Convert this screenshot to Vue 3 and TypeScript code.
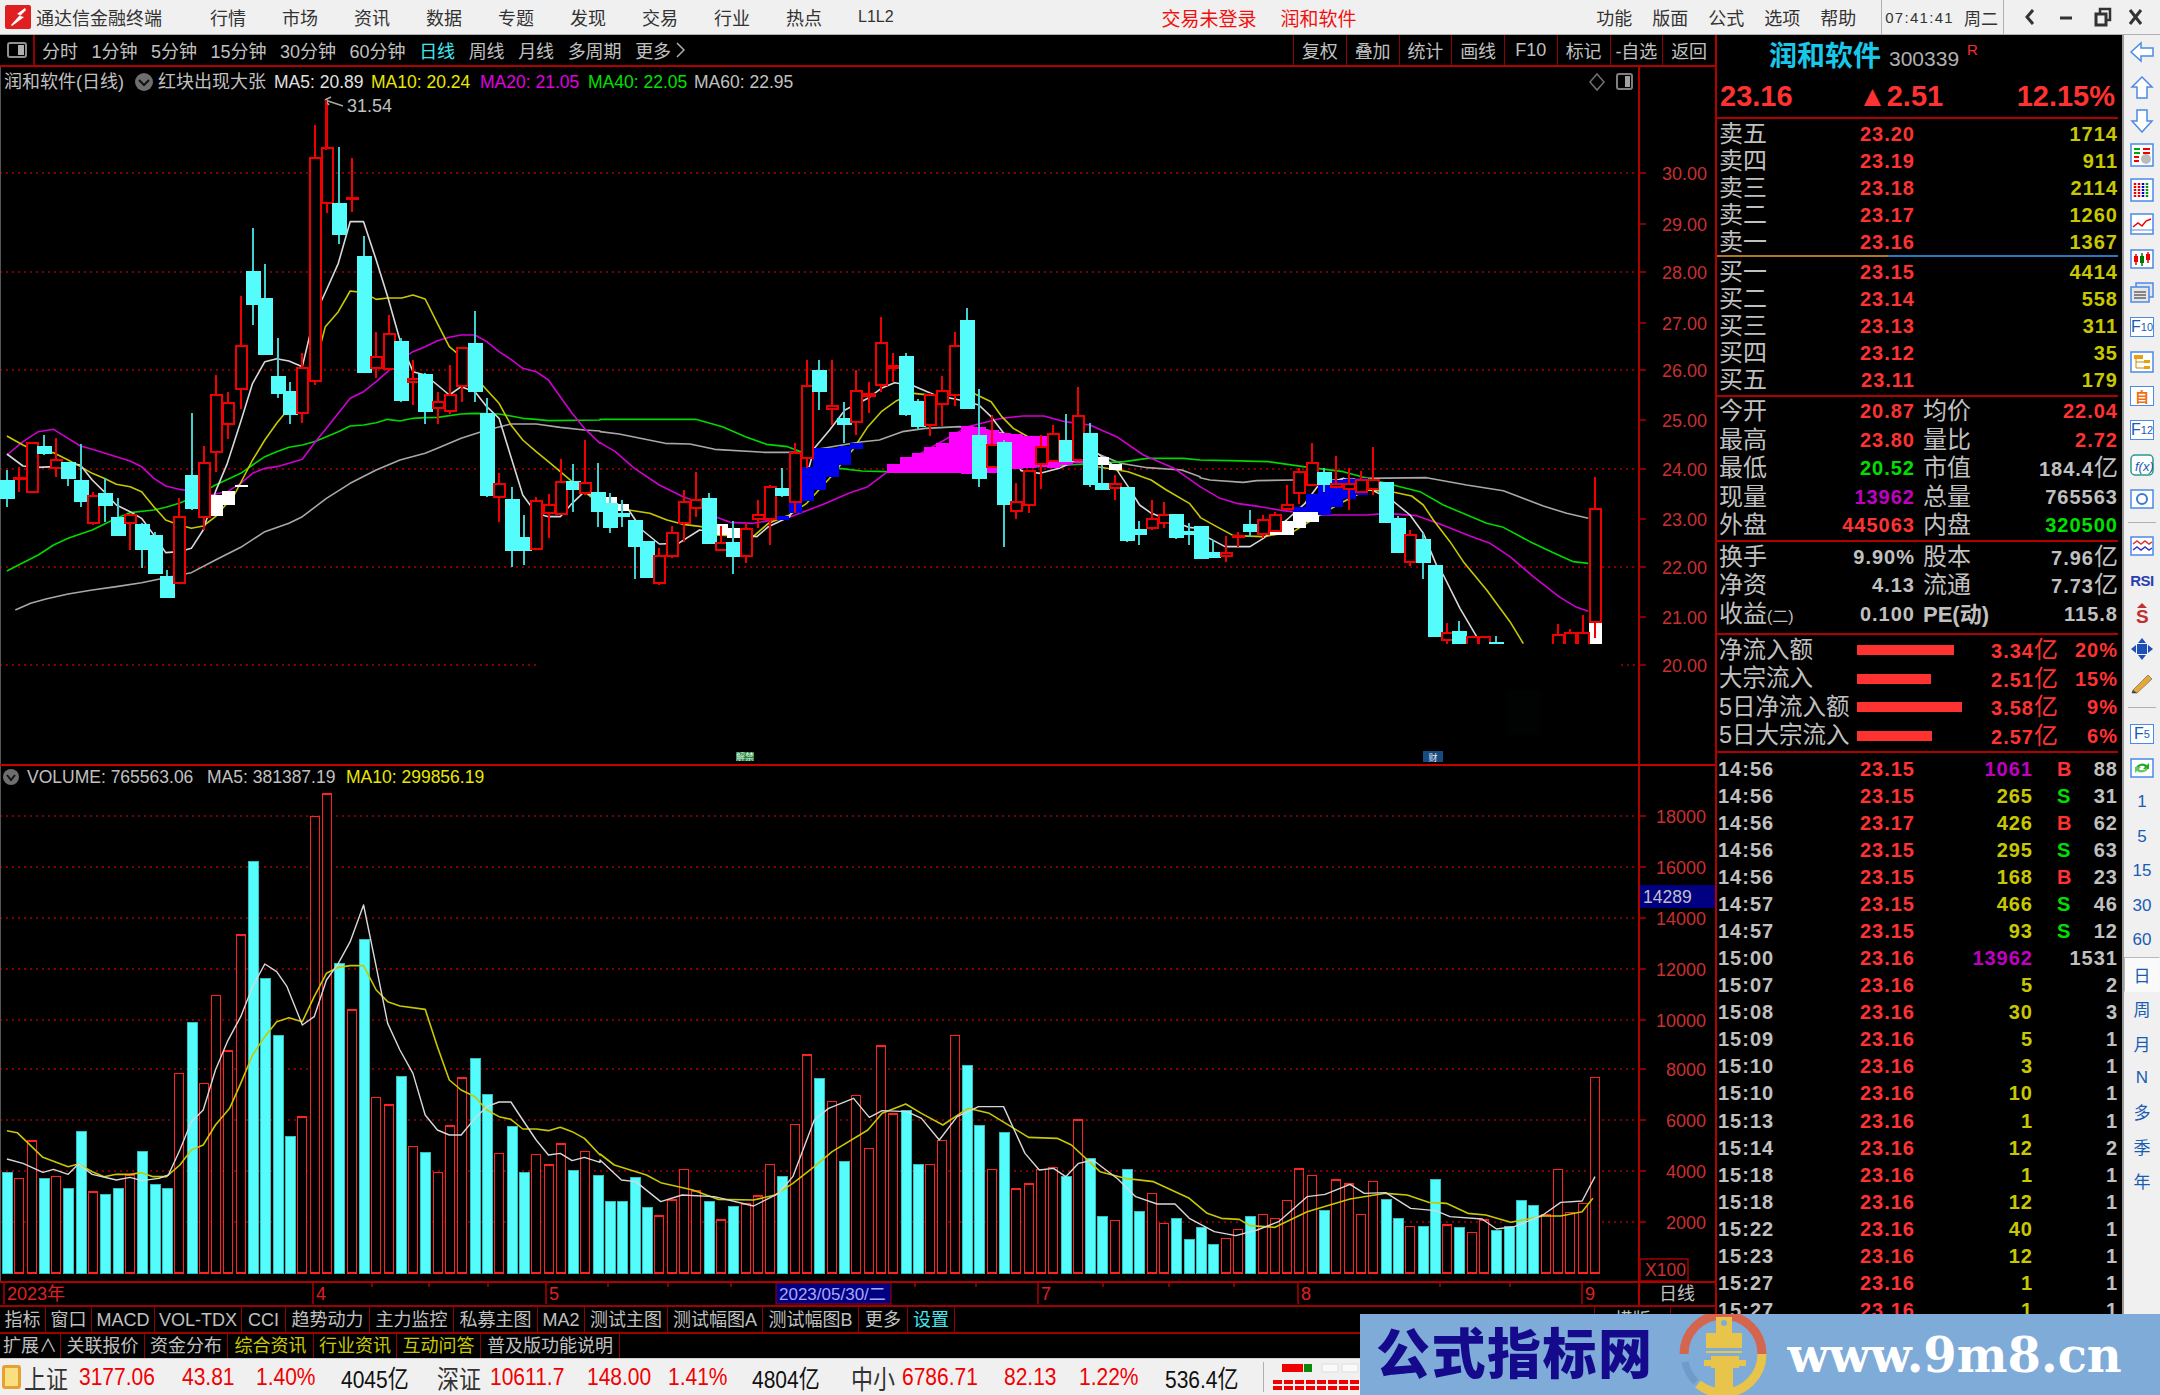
<template>
  <div class="screen">
    <header class="titlebar">
      <svg class="app-logo" width="26" height="24" viewBox="0 0 26 24">
        <rect width="26" height="24" rx="2" fill="#e02020" />
        <path d="M20 3 L12 9 L15 10 L6 20 L7 21 L19 12 L15 11 L21 5 Z" fill="#fff" />
      </svg>
      <span class="app-name">通达信金融终端</span>
      <nav class="main-menu">
        <span v-for="m in mainMenu" :key="m" :class="{ 'menu-small': m === 'L1L2' }">{{ m }}</span>
      </nav>
      <div class="alerts">
        <span>交易未登录</span>
        <span>润和软件</span>
      </div>
      <div class="title-right">
        <nav class="sub-menu">
          <span v-for="m in subMenu" :key="m">{{ m }}</span>
        </nav>
        <div class="clock">
          <span class="clock-time">07:41:41</span>
          <span>周二</span>
        </div>
        <div class="win-ctrl">
          <svg width="130" height="24" viewBox="0 0 130 24" fill="none" stroke="#333" stroke-width="3">
            <path d="M16 5 L10 12 L16 19" />
            <path d="M43 13 H55" />
            <rect x="79" y="9" width="10" height="11" stroke-width="3" />
            <path d="M83 8 V4 H93 V15 H90" stroke-width="2.5" />
            <path d="M113 5 L124 19 M124 5 L113 19" />
          </svg>
        </div>
      </div>
    </header>

    <div class="workspace">
      <section class="chart-col">
        <div class="toolbar">
          <div class="toolbar-icon">
            <svg width="20" height="16" viewBox="0 0 20 16">
              <rect x="1" y="1" width="18" height="14" rx="2" fill="none" stroke="#909090" stroke-width="2" />
              <rect x="11" y="3" width="6" height="10" fill="#b0b0b0" />
            </svg>
          </div>
          <div class="period-list">
            <span v-for="p in periods" :key="p" :class="{ active: p === '日线' }">{{ p }}</span>
            <svg class="more-chevron" width="9" height="16" viewBox="0 0 9 16">
              <path d="M1 1 L8 8 L1 15" fill="none" stroke="#b0b0b0" stroke-width="1.5" />
            </svg>
          </div>
          <div class="tool-btns">
            <span v-for="b in toolBtns" :key="b">{{ b }}</span>
          </div>
        </div>

        <svg class="pane-main" width="1715" height="697" viewBox="0 67 1715 697">
          <line
            v-for="g in mainGrid"
            :key="g.from + '-' + g.y"
            :x1="g.from"
            :x2="g.to"
            :y1="g.y"
            :y2="g.y"
            class="grid"
          />
          <line x1="0.5" x2="0.5" y1="67" y2="764" stroke="#555" />
          <line x1="1639" x2="1639" y1="67" y2="764" class="axis" />
          <polyline v-for="l in maLines" :key="l.name" :points="l.points" :stroke="l.color" class="ma" />
          <rect
            v-for="b in blocks"
            :key="b.key"
            :x="b.x"
            :y="b.y"
            width="13"
            :height="b.h"
            :fill="b.color"
            shape-rendering="crispEdges"
          />
          <g shape-rendering="crispEdges">
            <g v-for="c in candles" :key="c.i">
              <line :x1="c.x" :x2="c.x" :y1="c.high" :y2="c.top" :class="c.up ? 'wick-up' : 'wick-down'" />
              <line :x1="c.x" :x2="c.x" :y1="c.bot" :y2="c.low" :class="c.up ? 'wick-up' : 'wick-down'" />
              <rect
                :x="c.up ? c.x - 5.5 : c.x - 6.5"
                :y="c.top"
                :width="c.up ? 11 : 13"
                :height="c.h"
                :class="c.up ? 'body-up' : 'body-down'"
              />
            </g>
          </g>
          <rect x="1450" y="644" width="153" height="120" fill="#000" />
          <rect x="1508" y="690" width="32" height="45" fill="#010303" />

          <path d="M325 100 L331 97 M325 100 L329 105 M325 100 L343 106" stroke="#a8a8a8" stroke-width="1.5" fill="none" />
          <text x="347" y="112" class="t-18 fill-gray">31.54</text>
          <line x1="326" x2="326" y1="100" y2="150" stroke="#e00000" stroke-width="2" />

          <text x="4" y="88" class="t-cjk fill-gray">润和软件(日线)</text>
          <circle cx="144" cy="82" r="9" fill="#6e6e6e" />
          <path d="M139 80 L144 85 L149 80" stroke="#111" stroke-width="2" fill="none" />
          <text x="158" y="88" class="t-cjk fill-gray">红块出现大张</text>
          <text x="274" y="88" class="t-17 fill-white">MA5: 20.89</text>
          <text x="371" y="88" class="t-17 fill-yellow">MA10: 20.24</text>
          <text x="480" y="88" class="t-17 fill-magenta">MA20: 21.05</text>
          <text x="588" y="88" class="t-17 fill-green">MA40: 22.05</text>
          <text x="694" y="88" class="t-17 fill-gray">MA60: 22.95</text>

          <path d="M1597 74 L1604 82 L1597 90 L1590 82 Z" fill="none" stroke="#707070" stroke-width="1.5" />
          <rect x="1617" y="74" width="15" height="15" rx="2" fill="none" stroke="#808080" stroke-width="2" />
          <rect x="1625" y="76" width="5" height="11" fill="#a0a0a0" />

          <g v-for="p in priceTicks" :key="p.label">
            <line x1="1639" x2="1646" :y1="p.y" :y2="p.y" class="tick" />
            <text x="1707" :y="p.y + 7" text-anchor="end" class="t-18 fill-axis">{{ p.label }}</text>
          </g>

          <rect x="736" y="752" width="18" height="9" fill="#1a8a3a" />
          <text x="745" y="760" text-anchor="middle" class="t-tag">解禁</text>
          <rect x="1423" y="751" width="20" height="11" fill="#174a80" />
          <text x="1433" y="761" text-anchor="middle" class="t-tag">财</text>
        </svg>

        <svg class="pane-volume" width="1715" height="539" viewBox="0 766 1715 539">
          <line v-for="y in volGrid" :key="y" x1="0" x2="1639" :y1="y" :y2="y" class="grid" />
          <line x1="0.5" x2="0.5" y1="766" y2="1282" stroke="#555" />
          <line x1="1639" x2="1639" y1="766" y2="1305" class="axis" />
          <g shape-rendering="crispEdges">
            <rect
              v-for="v in volumes"
              :key="v.i"
              :x="v.up ? v.x - 4.5 : v.x - 5"
              :y="v.y"
              :width="v.up ? 9 : 10"
              :height="v.h"
              :class="v.up ? 'vol-up' : 'vol-down'"
            />
          </g>
          <polyline :points="volMa10" stroke="#c8c800" class="ma" />
          <polyline :points="volMa5" stroke="#d8d8d8" class="ma ma-thin" />

          <circle cx="11" cy="777" r="8" fill="#6e6e6e" />
          <path d="M7 775 L11 780 L15 775" stroke="#111" stroke-width="2" fill="none" />
          <text x="27" y="783" class="t-17 fill-gray">VOLUME: 765563.06</text>
          <text x="207" y="783" class="t-17 fill-gray">MA5: 381387.19</text>
          <text x="346" y="783" class="t-17 fill-yellow">MA10: 299856.19</text>

          <g v-for="v in volTicks" :key="v.label">
            <line x1="1639" x2="1646" :y1="v.y" :y2="v.y" class="tick" />
            <text x="1706" :y="v.y + 7" text-anchor="end" class="t-18 fill-axis">{{ v.label }}</text>
          </g>
          <rect x="1640" y="885" width="75" height="23" fill="#000080" />
          <text x="1643" y="903" class="t-17 fill-gray">14289</text>
          <rect x="1640" y="1259" width="48" height="22" fill="none" stroke="#a00000" stroke-width="1.5" />
          <text x="1645" y="1276" class="t-17 fill-axis">X100</text>

          <line x1="0" x2="1715" y1="1282" y2="1282" class="axis" />
          <line v-for="t in dateTicks" :key="t" :x1="t" :x2="t" y1="1283" y2="1287" class="tick" />
          <line v-for="d in dateLabels" :key="d.text" :x1="d.x" :x2="d.x" y1="1283" y2="1304" class="tick" />
          <text
            v-for="d in dateLabels"
            :key="'t' + d.text"
            :x="d.x + 3"
            y="1300"
            class="t-cjk fill-axis-bright"
          >{{ d.text }}</text>
          <rect x="776" y="1283" width="115" height="21" fill="#000080" stroke="#a00000" />
          <text x="779" y="1300" class="t-date">2023/05/30/二</text>
          <text x="1659" y="1300" class="t-cjk fill-gray">日线</text>
        </svg>

        <div class="tab-row">
          <span
            v-for="t in tabsA"
            :key="t.text"
            class="tab"
            :class="t.tone"
            :style="{ width: t.width + 'px' }"
          >{{ t.text }}</span>
          <span class="tab tab-end">横版</span>
        </div>
        <div class="tab-row">
          <span
            v-for="t in tabsB"
            :key="t.text"
            class="tab"
            :class="t.tone"
            :style="{ width: t.width + 'px' }"
          >{{ t.text }}</span>
        </div>
      </section>

      <aside class="quote">
        <div class="quote-title">
          <span class="stock-name">润和软件</span>
          <span class="stock-code">300339</span>
          <span class="stock-flag">R</span>
        </div>
        <div class="quote-price">
          <span>23.16</span>
          <span class="price-up">▲2.51</span>
          <span>12.15%</span>
        </div>

        <div class="book book-sell">
          <div v-for="r in sells" :key="r[0]" class="book-row">
            <span class="lbl">{{ r[0] }}</span>
            <span class="num red">{{ r[1] }}</span>
            <span class="num yellow">{{ r[2] }}</span>
          </div>
        </div>
        <div class="book-split"><i></i><b></b></div>
        <div class="book book-buy">
          <div v-for="r in buys" :key="r[0]" class="book-row">
            <span class="lbl">{{ r[0] }}</span>
            <span class="num red">{{ r[1] }}</span>
            <span class="num yellow">{{ r[2] }}</span>
          </div>
        </div>

        <div class="stat-block stat-a">
          <div v-for="s in statsA" :key="s.a" class="stat-row">
            <span class="lbl">{{ s.a }}</span>
            <span class="num" :class="s.ta">{{ s.va }}</span>
            <span class="lbl lbl-b">{{ s.b }}</span>
            <span class="num" :class="s.tb">{{ s.vb }}<em v-if="s.unit" class="unit">亿</em></span>
          </div>
        </div>
        <div class="stat-block stat-b">
          <div v-for="s in statsB" :key="s.a" class="stat-row">
            <span class="lbl">{{ s.a }}<small v-if="s.sub" class="lbl-sub">{{ s.sub }}</small></span>
            <span class="num gray">{{ s.va }}</span>
            <span class="lbl lbl-b">
              <template v-if="s.b === 'PE(动)'"><strong class="pe">PE(动)</strong></template>
              <template v-else>{{ s.b }}</template>
            </span>
            <span class="num gray">{{ s.vb }}<em v-if="s.unit" class="unit">亿</em></span>
          </div>
        </div>
        <div class="flow-block">
          <div v-for="f in flows" :key="f.label" class="flow-row">
            <span class="lbl flow-lbl">{{ f.label }}</span>
            <span class="flow-track"><i :style="{ width: f.bar + 'px' }"></i></span>
            <span class="num red">{{ f.val }}<em class="unit">亿</em></span>
            <span class="num red">{{ f.pct }}</span>
          </div>
        </div>
        <div class="ticks">
          <div v-for="(t, i) in ticks" :key="i" class="tick-row">
            <span class="num gray tick-time">{{ t[0] }}</span>
            <span class="num red">{{ t[1] }}</span>
            <span class="num" :class="t[2].length > 3 ? 'purple' : 'yellow'">{{ t[2] }}</span>
            <span class="num tick-side" :class="t[3] === 'B' ? 'red' : 'green'">{{ t[3] }}</span>
            <span class="num gray">{{ t[4] }}</span>
          </div>
        </div>
      </aside>

      <aside class="sidebar">
        <div class="side-btn"><svg width="26" height="22" viewBox="0 0 26 22"><path d="M2 11 L12 2 V7 H24 V15 H12 V20 Z" class="arrow" /></svg></div>
        <div class="side-btn"><svg width="24" height="24" viewBox="0 0 24 24"><path d="M12 2 L22 12 H17 V23 H7 V12 H2 Z" class="arrow" /></svg></div>
        <div class="side-btn"><svg width="24" height="24" viewBox="0 0 24 24"><path d="M12 23 L22 12 H17 V1 H7 V12 H2 Z" class="arrow" /></svg></div>
        <div class="side-btn">
          <svg width="24" height="24" viewBox="0 0 24 24">
            <rect x="1" y="1" width="22" height="22" class="box" />
            <path d="M4 6 H10 M4 10 H10" stroke="#0a0" stroke-width="2" />
            <path d="M13 6 H20 M13 10 H20" stroke="#e00" stroke-width="2" />
            <path d="M4 14 H9 M4 18 H9" stroke="#e00" stroke-width="2" />
            <circle cx="16" cy="16" r="5" fill="#bbb" />
          </svg>
        </div>
        <div class="side-btn">
          <svg width="24" height="24" viewBox="0 0 24 24">
            <rect x="1" y="1" width="22" height="22" class="box" />
            <path d="M5 5 V19 M9 5 V19" stroke="#e00" stroke-width="2.5" stroke-dasharray="2 1" />
            <path d="M13 5 V19" stroke="#00c" stroke-width="2.5" stroke-dasharray="2 1" />
            <path d="M17 5 V19" stroke="#090" stroke-width="2.5" stroke-dasharray="2 1" />
          </svg>
        </div>
        <div class="side-btn">
          <svg width="24" height="22" viewBox="0 0 24 22">
            <rect x="1" y="1" width="22" height="20" class="box" />
            <path d="M3 14 L8 10 L12 13 L16 8 L21 6" stroke="#e00" stroke-width="1.5" fill="none" />
            <path d="M1 17 H23" stroke="#4a8ae8" />
          </svg>
        </div>
        <div class="side-btn">
          <svg width="24" height="20" viewBox="0 0 24 20">
            <rect x="1" y="1" width="22" height="18" class="box" />
            <path d="M6 5 V16 M18 3 V14" stroke="#e00" stroke-width="1.5" />
            <rect x="4" y="7" width="4" height="6" fill="#e00" />
            <path d="M12 4 V17" stroke="#070" stroke-width="1.5" />
            <rect x="10" y="7" width="4" height="7" fill="#070" />
            <rect x="16" y="5" width="4" height="6" fill="#e00" />
          </svg>
        </div>
        <div class="side-btn">
          <svg width="24" height="22" viewBox="0 0 24 22" fill="#e6e6e6" stroke="#4a8ae8" stroke-width="1.5">
            <rect x="6" y="1" width="17" height="14" />
            <rect x="1" y="5" width="18" height="15" />
            <path d="M4 10 H16 M4 13 H16 M4 16 H16" stroke="#666" />
          </svg>
        </div>
        <div class="side-btn"><span class="icon-text">F<small>10</small></span></div>
        <div class="side-btn">
          <svg width="24" height="22" viewBox="0 0 24 22">
            <rect x="1" y="1" width="22" height="20" class="box" />
            <path d="M6 8 V17 H14 M6 11 H14" stroke="#c80" fill="none" />
            <rect x="4" y="4" width="9" height="4" fill="#e8a010" />
            <rect x="14" y="9" width="6" height="3" fill="#e8a010" />
            <rect x="14" y="15" width="6" height="3" fill="#e8a010" />
          </svg>
        </div>
        <div class="side-btn"><span class="icon-text icon-orange">自</span></div>
        <div class="side-btn"><span class="icon-text">F<small>12</small></span></div>
        <div class="side-btn">
          <svg width="24" height="22" viewBox="0 0 24 22">
            <rect x="1" y="1" width="22" height="20" rx="4" fill="#fff" stroke="#2a9a8a" stroke-width="1.5" />
            <text x="5" y="17" class="t-fx">f(x)</text>
          </svg>
        </div>
        <div class="side-btn">
          <svg width="24" height="20" viewBox="0 0 24 20">
            <rect x="1" y="1" width="22" height="18" class="box" />
            <circle cx="12" cy="10" r="5" fill="none" stroke="#3a7ad0" stroke-width="2" />
          </svg>
        </div>
        <div class="side-sep"></div>
        <div class="side-btn">
          <svg width="24" height="20" viewBox="0 0 24 20">
            <rect x="1" y="1" width="22" height="18" class="box" />
            <path d="M3 8 L7 5 L11 8 L15 5 L19 8 L22 6" stroke="#d33" fill="none" stroke-width="1.5" />
            <path d="M3 14 L7 11 L11 14 L15 11 L19 14 L22 12" stroke="#33c" fill="none" stroke-width="1.5" />
          </svg>
        </div>
        <div class="side-btn"><span class="rsi">RSI</span></div>
        <div class="side-btn">
          <svg width="22" height="24" viewBox="0 0 22 24">
            <path d="M11 1 L16 6 H6 Z" fill="#c03030" />
            <text x="5" y="21" class="t-dollar">S</text>
          </svg>
        </div>
        <div class="side-btn">
          <svg width="24" height="24" viewBox="0 0 24 24" fill="#1c4fb8">
            <path d="M12 1 L16 6 H8 Z M12 23 L16 18 H8 Z M1 12 L6 8 V16 Z M23 12 L18 8 V16 Z" />
            <rect x="7" y="7" width="10" height="10" />
          </svg>
        </div>
        <div class="side-btn">
          <svg width="24" height="22" viewBox="0 0 24 22">
            <path d="M3 18 L18 3 L22 7 L7 21 L2 21 Z" fill="#e8a830" stroke="#888" />
            <path d="M3 18 L2 21 L7 21" fill="#444" />
          </svg>
        </div>
        <div class="side-sep side-sep-wide"></div>
        <div class="side-btn"><span class="icon-text">F<small>5</small></span></div>
        <div class="side-btn">
          <svg width="24" height="20" viewBox="0 0 24 20">
            <rect x="1" y="1" width="22" height="18" class="box" />
            <path d="M6 9 A7 6 0 0 1 17 7 L19 5 V11 H13 L15 9 A4 3 0 0 0 8 10 Z" fill="#28a828" />
            <path d="M18 11 A7 6 0 0 1 7 13 L5 15 V9 H11 L9 11 A4 3 0 0 0 16 10 Z" fill="#60c860" />
          </svg>
        </div>
        <div
          v-for="s in sideCycles"
          :key="s"
          class="side-btn side-cycle"
          :class="{ pressed: s === '日' }"
        >{{ s }}</div>
      </aside>
    </div>

    <footer class="statusbar">
      <span class="idx-icon"></span>
      <span
        v-for="s in statusItems"
        :key="s.text"
        class="status-item"
        :class="s.tone"
        :style="{ width: s.width + 'px' }"
      >{{ s.text }}</span>
      <svg class="breadth" width="100" height="30" viewBox="0 0 100 30">
        <rect x="18" y="2" width="21" height="8" fill="#f00000" />
        <rect x="40" y="2" width="8" height="8" fill="#0a8a0a" />
        <rect x="58" y="2" width="16" height="8" fill="#fafafa" stroke="#ddd" />
        <rect x="78" y="2" width="16" height="8" fill="#fafafa" stroke="#ddd" />
        <g fill="#f00000">
          <rect v-for="d in breadthDots" :key="d.key" :x="d.x" :y="d.y" width="9" height="4" />
        </g>
      </svg>
    </footer>

    <div class="watermark">
      <span class="wm-cn">公式指标网</span>
      <svg class="wm-logo" width="90" height="81" viewBox="0 0 90 81">
        <path d="M6 40 A39 39 0 0 1 84 40" fill="none" stroke="#d4654e" stroke-width="9" />
        <path d="M84 40 A39 39 0 0 1 45 79" fill="none" stroke="#e8c44a" stroke-width="9" />
        <path d="M45 79 A39 39 0 0 1 20 70" fill="none" stroke="#e8c44a" stroke-width="9" />
        <path d="M7 48 A39 39 0 0 0 18 68" fill="none" stroke="#6f9bcb" stroke-width="7" />
        <g fill="#e8c44a">
          <rect x="38" y="3" width="16" height="16" />
          <rect x="28" y="19" width="36" height="20" />
          <rect x="33" y="42" width="28" height="12" />
          <rect x="26" y="46" width="42" height="6" />
          <rect x="37" y="54" width="18" height="26" />
        </g>
        <circle cx="46" cy="9" r="3" fill="#7fabd9" />
        <rect x="24" y="34" width="46" height="3" fill="#7fabd9" />
      </svg>
      <span class="wm-url">www.9m8.cn</span>
    </div>
  </div>
</template>

<script setup lang="ts">
type Candle = [string, number, number, number, number]

const mainMenu = ['行情', '市场', '资讯', '数据', '专题', '发现', '交易', '行业', '热点', 'L1L2']
const subMenu = ['功能', '版面', '公式', '选项', '帮助']
const periods = ['分时', '1分钟', '5分钟', '15分钟', '30分钟', '60分钟', '日线', '周线', '月线', '多周期', '更多']
const toolBtns = ['复权', '叠加', '统计', '画线', 'F10', '标记', '-自选', '返回']

const barX = (i: number) => 6.9 + i * 12.31

// measured off the reference in three crops, each with its own origin
const part1: Candle[] = [
  ['c', 1140, 1172, 1224, 1250], ['r', 1130, 1163, 1168, 1205], ['r', 1060, 1060, 1205, 1205], ['c', 1035, 1072, 1088, 1095],
  ['r', 1045, 1110, 1133, 1160], ['c', 1115, 1118, 1165, 1188], ['c', 1063, 1172, 1232, 1250], ['r', 1205, 1218, 1298, 1305],
  ['c', 1165, 1212, 1246, 1295], ['c', 1225, 1285, 1336, 1336], ['r', 1275, 1276, 1298, 1380], ['c', 1300, 1305, 1378, 1435],
  ['c', 1325, 1338, 1450, 1450], ['c', 1440, 1460, 1522, 1525], ['r', 1225, 1280, 1478, 1478], ['c', 968, 1158, 1255, 1260],
  ['r', 1068, 1118, 1280, 1320], ['r', 855, 915, 1087, 1145], ['r', 905, 938, 1002, 1048], ['r', 617, 767, 897, 958],
  ['c', 415, 545, 643, 705], ['c', 522, 627, 792, 792], ['c', 745, 860, 910, 925], ['c', 875, 906, 972, 1002],
  ['r', 790, 835, 970, 998], ['r', 105, 205, 872, 885], ['r', 25, 173, 340, 368], ['c', 172, 343, 432, 462],
  ['r', 203, 324, 328, 365], ['c', 438, 500, 845, 845], ['r', 725, 800, 833, 865], ['r', 676, 732, 838, 838],
  ['c', 745, 757, 931, 935], ['r', 810, 866, 876, 945], ['c', 850, 856, 963, 1002], ['r', 905, 937, 955, 1003],
  ['r', 825, 915, 962, 972], ['r', 775, 775, 889, 935], ['c', 662, 762, 904, 935], ['c', 925, 972, 1216, 1220],
  ['r', 1150, 1181, 1222, 1295], ['c', 1190, 1230, 1381, 1430], ['c', 1275, 1343, 1381, 1425], ['r', 1220, 1232, 1376, 1376],
  ['r', 1212, 1244, 1268, 1345], ['r', 1108, 1177, 1272, 1272], ['c', 1122, 1176, 1197, 1265], ['r', 1050, 1178, 1208, 1215],
  ['c', 1120, 1208, 1264, 1310],
]
const part2: Candle[] = [
  ['c', 640, 672, 740, 758], ['c', 660, 703, 708, 740], ['c', 722, 722, 797, 897], ['c', 783, 785, 890, 893],
  ['r', 805, 828, 908, 915], ['r', 737, 760, 828, 835], ['r', 630, 665, 728, 785], ['r', 575, 661, 684, 712],
  ['c', 638, 656, 790, 790], ['r', 738, 790, 810, 810], ['c', 722, 790, 828, 883], ['r', 730, 746, 828, 848],
  ['r', 660, 706, 716, 745], ['r', 615, 620, 716, 795], ['c', 565, 628, 646, 650], ['r', 490, 520, 666, 700],
  ['r', 240, 319, 535, 565], ['c', 240, 272, 333, 390], ['r', 240, 377, 386, 435], ['c', 367, 416, 432, 490],
  ['r', 270, 332, 427, 465], ['r', 305, 342, 348, 400], ['r', 110, 188, 315, 335], ['r', 220, 259, 263, 305],
  ['c', 218, 232, 402, 408], ['c', 358, 367, 438, 450], ['r', 340, 345, 436, 468], ['r', 287, 332, 372, 438],
  ['r', 155, 198, 345, 378], ['c', 83, 124, 384, 384], ['c', 327, 467, 595, 622], ['r', 405, 494, 562, 562],
  ['c', 480, 488, 672, 802], ['r', 610, 665, 693, 718], ['r', 572, 572, 675, 700], ['r', 465, 500, 552, 628],
  ['r', 435, 463, 544, 544], ['c', 403, 484, 542, 545], ['r', 322, 409, 540, 540], ['c', 430, 461, 613, 620],
  ['c', 555, 612, 627, 627], ['r', 585, 612, 625, 660], ['c', 622, 623, 780, 785], ['c', 722, 750, 762, 795],
  ['r', 660, 718, 743, 750], ['r', 665, 706, 730, 745], ['c', 705, 705, 772, 778], ['c', 728, 757, 763, 795],
]
const part3: Candle[] = [
  ['c', 380, 380, 473, 473], ['c', 420, 460, 470, 475], ['r', 408, 458, 468, 487], ['r', 395, 408, 412, 440],
  ['c', 330, 376, 394, 410], ['r', 345, 360, 402, 415], ['r', 335, 345, 392, 392], ['r', 255, 314, 327, 330],
  ['r', 205, 215, 279, 312], ['r', 128, 188, 254, 254], ['c', 205, 218, 252, 275], ['r', 168, 253, 262, 262],
  ['r', 205, 253, 266, 330], ['r', 213, 240, 275, 275], ['r', 142, 241, 266, 285], ['c', 250, 250, 366, 366],
  ['c', 348, 358, 456, 456], ['r', 390, 404, 487, 497], ['c', 400, 421, 487, 537], ['c', 497, 497, 708, 708],
  ['r', 668, 698, 720, 731], ['c', 663, 695, 760, 760], ['r', 712, 712, 760, 760], ['r', 710, 710, 760, 760],
  ['c', 708, 728, 760, 760], ['c', 800, 800, 810, 810], ['c', 800, 800, 810, 810], ['c', 800, 800, 810, 810],
  ['r', 800, 800, 810, 810], ['r', 672, 706, 760, 760], ['r', 686, 700, 760, 760], ['r', 645, 698, 760, 760],
  ['r', 232, 327, 665, 715],
]

const toCandles = (rows: Candle[], first: number, origin: number) =>
  rows.map((r, n) => {
    const top = origin + r[2] / 3
    const bot = origin + r[3] / 3
    return {
      i: first + n,
      x: Math.round(barX(first + n)),
      up: r[0] === 'r',
      high: origin + r[1] / 3,
      top,
      bot,
      low: origin + r[4] / 3,
      h: Math.max(bot - top, 1),
    }
  })

const candles = [
  ...toCandles(part1, 0, 90),
  ...toCandles(part2, 49, 280),
  ...toCandles(part3, 97, 400),
]

const traceMain = (a: number[], b: number[], c: number[]) => {
  const out: string[] = []
  for (let i = 0; i < a.length; i += 2) out.push(`${a[i] / 2.613},${90 + a[i + 1] / 3}`)
  for (let i = 0; i < b.length; i += 2) out.push(`${600 + b[i] / 2.613},${280 + b[i + 1] / 3}`)
  for (let i = 0; i < c.length; i += 2) out.push(`${1200 + c[i] / 3},${400 + c[i + 1] / 3}`)
  return out.join(' ')
}

const traceVol = (a: number[], b: number[]) => {
  const out: string[] = []
  for (let i = 0; i < a.length; i += 2) out.push(`${a[i] / 2.613},${760 + a[i + 1] / 3}`)
  for (let i = 0; i < b.length; i += 2) out.push(`${600 + b[i] / 1.4},${1000 + b[i + 1] / 3}`)
  return out.join(' ')
}

const maLines = [
  {
    name: 'ma60',
    color: '#a8a8a8',
    points: traceMain(
      [40, 1560, 80, 1540, 120, 1527, 178, 1512, 241, 1500, 304, 1490, 370, 1478, 433, 1463, 500, 1448, 563, 1410, 629, 1372, 692, 1325, 755, 1300, 790, 1280, 853, 1225, 915, 1180, 983, 1140, 1045, 1110, 1111, 1090, 1143, 1075, 1205, 1045, 1272, 1020, 1335, 1002, 1401, 1002, 1464, 1012, 1527, 1020, 1568, 1023],
      [0, 455, 50, 462, 170, 490, 235, 492, 300, 508, 430, 517, 520, 517, 680, 486, 730, 480, 790, 455, 850, 445, 940, 440, 1010, 450, 1100, 470, 1297, 520, 1360, 550, 1430, 563, 1520, 570, 1568, 590],
      [0, 233, 30, 240, 130, 247, 170, 242, 280, 240, 400, 240, 500, 235, 680, 233, 800, 255, 910, 272, 1030, 318, 1100, 340, 1165, 355],
    ),
  },
  {
    name: 'ma40',
    color: '#00d800',
    points: traceMain(
      [18, 1443, 60, 1418, 100, 1395, 140, 1365, 178, 1345, 210, 1332, 241, 1320, 304, 1285, 340, 1268, 402, 1260, 433, 1252, 468, 1240, 500, 1225, 563, 1185, 629, 1150, 660, 1125, 692, 1100, 723, 1085, 755, 1072, 790, 1065, 821, 1055, 853, 1040, 884, 1025, 915, 1008, 950, 1005, 983, 998, 1013, 988, 1045, 993, 1079, 985, 1111, 983, 1143, 982, 1205, 972, 1241, 970, 1304, 972, 1335, 978, 1366, 985, 1401, 988, 1433, 992, 1568, 990],
      [0, 418, 250, 418, 320, 440, 380, 470, 435, 493, 490, 500, 525, 515, 625, 565, 685, 573, 748, 575, 1000, 570, 1370, 545, 1430, 535, 1525, 535, 1568, 540],
      [0, 180, 90, 182, 205, 185, 310, 200, 430, 215, 540, 245, 660, 275, 730, 315, 860, 370, 910, 382, 990, 425, 1060, 458, 1120, 485, 1165, 490],
    ),
  },
  {
    name: 'ma20',
    color: '#d000d0',
    points: traceMain(
      [18, 1095, 60, 1055, 100, 1025, 140, 1018, 178, 1045, 210, 1068, 241, 1078, 304, 1100, 340, 1113, 370, 1130, 402, 1165, 433, 1188, 468, 1198, 500, 1203, 549, 1215, 594, 1205, 629, 1180, 660, 1150, 692, 1135, 723, 1130, 755, 1120, 790, 1108, 821, 1060, 853, 1015, 884, 970, 915, 925, 950, 905, 983, 875, 1013, 845, 1045, 810, 1079, 785, 1111, 770, 1143, 752, 1174, 742, 1205, 735, 1241, 735, 1272, 755, 1304, 785, 1335, 808, 1366, 835, 1401, 845, 1433, 870, 1464, 920, 1495, 970, 1527, 1015, 1568, 1060],
      [0, 488, 40, 515, 90, 565, 155, 615, 217, 650, 265, 670, 305, 712, 340, 727, 400, 730, 495, 712, 590, 670, 650, 640, 700, 620, 748, 578, 900, 480, 960, 440, 1050, 415, 1105, 408, 1160, 408, 1215, 425, 1280, 435, 1350, 470, 1420, 525, 1500, 565, 1568, 620],
      [0, 260, 60, 295, 110, 310, 180, 320, 250, 332, 360, 345, 500, 345, 560, 340, 650, 347, 720, 372, 810, 408, 870, 430, 930, 470, 1000, 530, 1080, 592, 1130, 622, 1165, 634],
    ),
  },
  {
    name: 'ma10',
    color: '#c8c800',
    points: traceMain(
      [18, 1038, 60, 1065, 100, 1088, 140, 1088, 178, 1110, 210, 1130, 241, 1150, 272, 1165, 304, 1183, 340, 1190, 370, 1205, 402, 1250, 433, 1290, 468, 1305, 500, 1315, 531, 1308, 563, 1280, 612, 1215, 660, 1110, 692, 1050, 723, 1000, 755, 955, 790, 880, 840, 755, 850, 710, 884, 665, 915, 603, 950, 608, 983, 628, 1013, 624, 1050, 624, 1079, 615, 1111, 627, 1143, 700, 1174, 770, 1205, 800, 1241, 860, 1272, 900, 1304, 940, 1335, 1005, 1366, 1050, 1401, 1085, 1433, 1115, 1464, 1145, 1495, 1175, 1527, 1205, 1560, 1235],
      [24, 670, 75, 690, 130, 700, 175, 720, 217, 733, 265, 740, 300, 765, 400, 770, 440, 730, 495, 705, 540, 670, 600, 595, 660, 510, 700, 440, 735, 395, 775, 362, 820, 340, 875, 347, 980, 342, 1022, 365, 1050, 410, 1080, 445, 1115, 468, 1300, 560, 1380, 575, 1440, 600, 1480, 630, 1540, 670, 1568, 710],
      [0, 352, 50, 380, 100, 407, 190, 410, 280, 395, 360, 345, 430, 305, 500, 270, 575, 275, 635, 288, 670, 315, 700, 360, 750, 425, 790, 485, 860, 570, 930, 665, 970, 731],
    ),
  },
  {
    name: 'ma5',
    color: '#d8d8d8',
    points: traceMain(
      [18, 1092, 60, 1128, 100, 1132, 140, 1130, 178, 1118, 210, 1125, 241, 1170, 272, 1205, 304, 1245, 340, 1265, 370, 1285, 402, 1335, 433, 1388, 468, 1385, 500, 1375, 531, 1320, 563, 1205, 594, 1120, 629, 995, 660, 880, 692, 815, 723, 806, 755, 813, 790, 830, 821, 680, 853, 600, 884, 520, 915, 395, 950, 395, 983, 510, 1013, 620, 1045, 750, 1079, 845, 1111, 855, 1143, 885, 1174, 915, 1205, 890, 1241, 905, 1272, 950, 1304, 985, 1335, 1100, 1366, 1215, 1401, 1270, 1433, 1280, 1464, 1280, 1495, 1240, 1527, 1205, 1560, 1225],
      [24, 660, 75, 690, 110, 750, 155, 792, 205, 790, 260, 750, 410, 770, 440, 740, 495, 710, 525, 650, 560, 505, 600, 450, 640, 390, 700, 355, 735, 325, 770, 308, 820, 318, 875, 345, 940, 360, 990, 375, 1022, 410, 1055, 460, 1100, 572, 1150, 580, 1200, 565, 1248, 540, 1300, 520, 1345, 560, 1380, 620, 1410, 675, 1441, 700, 1538, 742, 1568, 745],
      [0, 400, 75, 440, 150, 440, 190, 415, 260, 360, 315, 310, 352, 260, 430, 235, 500, 262, 575, 300, 630, 345, 670, 400, 710, 497, 730, 525, 780, 625, 830, 710, 860, 731],
    ),
  },
]

const WHITE = '#ffffff'
const BLUE = '#0000f0'
const PINK = '#ff00ff'
const blockRows: [number, number, number, string][] = [
  [17, 495, 516, WHITE], [18, 491, 505, WHITE], [19, 484.7, 487, WHITE],
  [49, 496.7, 504, WHITE], [50, 504, 510.7, WHITE], [58, 524, 535, WHITE], [59, 528, 538, WHITE],
  [63, 516, 519.7, BLUE], [64, 502.7, 513.3, BLUE], [65, 466.7, 501, BLUE], [66, 448.3, 490, BLUE],
  [67, 447.7, 476.7, BLUE], [68, 445.7, 465.3, BLUE], [69, 442.7, 448.7, BLUE],
  [72, 464.3, 472.7, PINK], [73, 457.3, 472.7, PINK], [74, 452.7, 472.7, PINK], [75, 446.7, 472.7, PINK],
  [76, 443.3, 472.7, PINK], [77, 432.3, 472.7, PINK], [78, 425.7, 474, PINK], [79, 426.7, 474, PINK],
  [80, 430, 472.7, PINK], [81, 433.3, 470.7, PINK], [82, 434.3, 469.3, PINK], [83, 436, 468.3, PINK],
  [84, 436, 466.7, PINK], [85, 461.7, 468, PINK], [86, 460, 465, PINK], [87, 459.3, 463.3, PINK],
  [89, 456.7, 465, WHITE], [90, 464.3, 470, WHITE],
  [103, 531.7, 535.3, WHITE], [104, 520.7, 535.3, WHITE], [105, 511.7, 528.3, WHITE], [106, 511.7, 522, WHITE],
  [105, 507.3, 511.7, BLUE], [106, 494, 511.7, BLUE], [107, 483.3, 515, BLUE], [108, 480, 507.3, BLUE],
  [109, 479.3, 499, BLUE], [110, 478.3, 495, BLUE],
  [129, 621.7, 643.7, WHITE],
]
const blocks = blockRows.map((b, n) => ({
  key: n,
  x: Math.round(barX(b[0])) - 6.5,
  y: b[1],
  h: b[2] - b[1],
  color: b[3],
}))

const mainGrid = [
  { y: 173, from: 0, to: 1639 },
  { y: 272, from: 0, to: 1639 },
  { y: 370, from: 0, to: 1639 },
  { y: 469, from: 0, to: 1639 },
  { y: 567, from: 0, to: 1639 },
  { y: 665, from: 0, to: 537 },
  { y: 665, from: 1621, to: 1639 },
]

const priceTicks = [
  { label: '30.00', y: 173 }, { label: '29.00', y: 224 }, { label: '28.00', y: 272 }, { label: '27.00', y: 323 },
  { label: '26.00', y: 370 }, { label: '25.00', y: 420 }, { label: '24.00', y: 469 }, { label: '23.00', y: 519 },
  { label: '22.00', y: 567 }, { label: '21.00', y: 617 }, { label: '20.00', y: 665 },
]

const volTicks = [
  { label: '18000', y: 816 }, { label: '16000', y: 867 }, { label: '14000', y: 918 }, { label: '12000', y: 969 },
  { label: '10000', y: 1020 }, { label: '8000', y: 1069 }, { label: '6000', y: 1120 }, { label: '4000', y: 1171 },
  { label: '2000', y: 1222 },
]
const volGrid = volTicks.map((v) => v.y)

const volA = [1236, 1256, 1143, 1254, 1250, 1286, 1115, 1296, 1304, 1286, 1245, 1173, 1272, 1286, 940, 786, 971, 706, 873, 525, 304, 656, 827, 1128, 1071, 170, 102, 610, 750, 538, 1013, 1035, 948, 1160, 1178, 1237, 1098, 954, 894, 1002, 1180, 1100, 1236, 1183, 1215, 1152, 1232, 1174, 1245]
const volB = [605, 605, 533, 623, 648, 600, 508, 573, 605, 660, 618, 612, 588, 493, 529, 373, 165, 236, 305, 485, 287, 445, 138, 342, 331, 493, 493, 422, 106, 196, 376, 508, 398, 567, 552, 508, 503, 529, 360, 475, 650, 661, 507, 633, 580, 670, 655, 718, 682, 732, 715, 688, 650, 643, 655, 602, 507, 526, 630, 540, 552, 643, 544, 597, 655, 680, 678, 538, 675, 682, 697, 660, 690, 678, 601, 615, 645, 508, 638, 610, 233]
const VOL_BASE = 1273
const volumes = [...volA.map((v) => 760 + v / 3), ...volB.map((v) => 1000 + v / 3)].map((y, i) => ({
  i,
  x: Math.round(barX(i)),
  y,
  h: VOL_BASE - y,
  up: candles[i].up,
}))

const volMa5 = traceVol(
  [18, 1197, 60, 1210, 112, 1237, 140, 1228, 178, 1243, 205, 1212, 241, 1243, 304, 1260, 340, 1252, 370, 1262, 415, 1255, 440, 1245, 470, 1170, 500, 1085, 531, 1050, 563, 930, 594, 845, 629, 770, 660, 680, 692, 612, 723, 635, 750, 680, 790, 795, 821, 770, 853, 660, 884, 610, 915, 545, 950, 435, 983, 620, 1013, 790, 1045, 870, 1079, 940, 1111, 1065, 1143, 1110, 1174, 1125, 1205, 1125, 1241, 1075, 1272, 1040, 1304, 1026, 1335, 1026, 1366, 1080, 1401, 1140, 1433, 1185, 1464, 1180, 1495, 1202, 1527, 1192, 1568, 1207],
  [0, 480, 30, 540, 50, 545, 85, 605, 115, 585, 160, 590, 215, 618, 250, 580, 270, 530, 300, 360, 320, 325, 355, 295, 377, 352, 395, 332, 430, 335, 450, 355, 475, 420, 500, 350, 530, 320, 565, 320, 595, 460, 615, 510, 635, 505, 652, 530, 670, 490, 690, 480, 725, 537, 750, 590, 780, 612, 805, 612, 825, 655, 860, 695, 890, 707, 920, 690, 950, 665, 990, 590, 1015, 583, 1050, 553, 1070, 580, 1100, 578, 1135, 625, 1170, 632, 1190, 650, 1235, 657, 1255, 687, 1280, 680, 1320, 645, 1345, 607, 1375, 603, 1393, 530],
)
const volMa10 = traceVol(
  [18, 1112, 45, 1118, 112, 1192, 178, 1220, 205, 1212, 241, 1235, 272, 1250, 304, 1243, 340, 1243, 370, 1238, 400, 1250, 435, 1250, 470, 1215, 500, 1170, 531, 1155, 563, 1095, 600, 1045, 629, 970, 660, 885, 692, 830, 723, 785, 755, 773, 790, 785, 821, 710, 853, 640, 884, 622, 915, 617, 950, 617, 983, 690, 1013, 725, 1045, 738, 1111, 748, 1143, 860, 1174, 960, 1205, 990, 1241, 1010, 1272, 1050, 1304, 1070, 1335, 1078, 1366, 1107, 1401, 1107, 1433, 1112, 1464, 1102, 1495, 1115, 1527, 1135, 1568, 1185],
  [0, 462, 20, 495, 65, 525, 85, 548, 130, 570, 165, 598, 215, 600, 245, 585, 270, 550, 300, 500, 325, 455, 375, 390, 395, 340, 428, 312, 450, 340, 480, 375, 515, 325, 545, 340, 600, 412, 640, 415, 660, 435, 700, 515, 735, 535, 775, 545, 825, 595, 850, 640, 870, 655, 895, 658, 910, 677, 945, 682, 990, 635, 1050, 597, 1100, 580, 1130, 585, 1160, 607, 1185, 610, 1215, 640, 1240, 645, 1275, 667, 1320, 648, 1345, 648, 1375, 635, 1390, 595],
)

const dateTicks = [372, 429, 488, 608, 668, 731, 915, 976, 1103, 1169, 1234, 1440, 1510]
const dateLabels = [
  { text: '2023年', x: 4 },
  { text: '4', x: 313 },
  { text: '5', x: 546 },
  { text: '7', x: 1038 },
  { text: '8', x: 1298 },
  { text: '9', x: 1582 },
]

const tabsA = [
  { text: '指标', width: 46, tone: '' },
  { text: '窗口', width: 46, tone: '' },
  { text: 'MACD', width: 63, tone: '' },
  { text: 'VOL-TDX', width: 87, tone: '' },
  { text: 'CCI', width: 44, tone: '' },
  { text: '趋势动力', width: 84, tone: '' },
  { text: '主力监控', width: 84, tone: '' },
  { text: '私募主图', width: 84, tone: '' },
  { text: 'MA2', width: 47, tone: '' },
  { text: '测试主图', width: 83, tone: '' },
  { text: '测试幅图A', width: 95, tone: '' },
  { text: '测试幅图B', width: 96, tone: '' },
  { text: '更多', width: 49, tone: '' },
  { text: '设置', width: 47, tone: 'tab-cyan' },
]
const tabsB = [
  { text: '扩展∧', width: 61, tone: '' },
  { text: '关联报价', width: 84, tone: '' },
  { text: '资金分布', width: 83, tone: '' },
  { text: '综合资讯', width: 86, tone: 'tab-olive' },
  { text: '行业资讯', width: 83, tone: 'tab-olive' },
  { text: '互动问答', width: 84, tone: 'tab-olive' },
  { text: '普及版功能说明', width: 139, tone: '' },
]

const sells = [
  ['卖五', '23.20', '1714'], ['卖四', '23.19', '911'], ['卖三', '23.18', '2114'], ['卖二', '23.17', '1260'], ['卖一', '23.16', '1367'],
]
const buys = [
  ['买一', '23.15', '4414'], ['买二', '23.14', '558'], ['买三', '23.13', '311'], ['买四', '23.12', '35'], ['买五', '23.11', '179'],
]
const statsA = [
  { a: '今开', va: '20.87', ta: 'red', b: '均价', vb: '22.04', tb: 'red', unit: false },
  { a: '最高', va: '23.80', ta: 'red', b: '量比', vb: '2.72', tb: 'red', unit: false },
  { a: '最低', va: '20.52', ta: 'green', b: '市值', vb: '184.4', tb: 'gray', unit: true },
  { a: '现量', va: '13962', ta: 'purple', b: '总量', vb: '765563', tb: 'gray', unit: false },
  { a: '外盘', va: '445063', ta: 'red', b: '内盘', vb: '320500', tb: 'green', unit: false },
]
const statsB = [
  { a: '换手', sub: '', va: '9.90%', b: '股本', vb: '7.96', unit: true },
  { a: '净资', sub: '', va: '4.13', b: '流通', vb: '7.73', unit: true },
  { a: '收益', sub: '(二)', va: '0.100', b: 'PE(动)', vb: '115.8', unit: false },
]
const flows = [
  { label: '净流入额', bar: 97, val: '3.34', pct: '20%' },
  { label: '大宗流入', bar: 74, val: '2.51', pct: '15%' },
  { label: '5日净流入额', bar: 105, val: '3.58', pct: '9%' },
  { label: '5日大宗流入', bar: 75, val: '2.57', pct: '6%' },
]
const ticks = [
  ['14:56', '23.15', '1061', 'B', '88'], ['14:56', '23.15', '265', 'S', '31'], ['14:56', '23.17', '426', 'B', '62'],
  ['14:56', '23.15', '295', 'S', '63'], ['14:56', '23.15', '168', 'B', '23'], ['14:57', '23.15', '466', 'S', '46'],
  ['14:57', '23.15', '93', 'S', '12'], ['15:00', '23.16', '13962', '', '1531'], ['15:07', '23.16', '5', '', '2'],
  ['15:08', '23.16', '30', '', '3'], ['15:09', '23.16', '5', '', '1'], ['15:10', '23.16', '3', '', '1'],
  ['15:10', '23.16', '10', '', '1'], ['15:13', '23.16', '1', '', '1'], ['15:14', '23.16', '12', '', '2'],
  ['15:18', '23.16', '1', '', '1'], ['15:18', '23.16', '12', '', '1'], ['15:22', '23.16', '40', '', '1'],
  ['15:23', '23.16', '12', '', '1'], ['15:27', '23.16', '1', '', '1'], ['15:27', '23.16', '1', '', '1'],
]

const sideCycles = ['1', '5', '15', '30', '60', '日', '周', '月', 'N', '多', '季', '年']

const statusRaw = [
  { text: '上证', left: 24, tone: 'st-label' },
  { text: '3177.06', left: 79, tone: 'st-red' },
  { text: '43.81', left: 182, tone: 'st-red' },
  { text: '1.40%', left: 256, tone: 'st-red' },
  { text: '4045亿', left: 341, tone: 'st-dark' },
  { text: '深证', left: 437, tone: 'st-label' },
  { text: '10611.7', left: 490, tone: 'st-red' },
  { text: '148.00', left: 587, tone: 'st-red' },
  { text: '1.41%', left: 668, tone: 'st-red' },
  { text: '4804亿', left: 752, tone: 'st-dark' },
  { text: '中小', left: 851, tone: 'st-label' },
  { text: '6786.71', left: 902, tone: 'st-red' },
  { text: '82.13', left: 1004, tone: 'st-red' },
  { text: '1.22%', left: 1079, tone: 'st-red' },
  { text: '536.4亿', left: 1165, tone: 'st-dark' },
]
const statusItems = statusRaw.map((s, i) => ({
  ...s,
  width: (i + 1 < statusRaw.length ? statusRaw[i + 1].left : 1263) - s.left,
}))

const breadthDots: { key: string; x: number; y: number }[] = []
for (let col = 0; col < 8; col++) {
  for (const y of [18, 24]) breadthDots.push({ key: `${col}-${y}`, x: 9 + col * 11, y })
}
</script>

<style>
html,
body {
  margin: 0;
  background: #000;
}
</style>

<style scoped>
.screen {
  position: relative;
  display: flex;
  flex-direction: column;
  width: 2160px;
  height: 1395px;
  overflow: hidden;
  background: #000;
  font-family: "Liberation Sans", "Noto Sans CJK SC", sans-serif;
  color: #c0c0c0;
}

.titlebar {
  display: flex;
  align-items: center;
  height: 35px;
  box-sizing: border-box;
  background: #f0f0f0;
  border-bottom: 1px solid #b0b0b0;
  color: #333;
  font-size: 18px;
}
.app-logo {
  margin-left: 5px;
  margin-right: 5px;
}
.main-menu {
  display: flex;
  align-items: center;
  gap: 36px;
  margin-left: 48px;
}
.menu-small {
  font-size: 16px;
}
.alerts {
  display: flex;
  gap: 24px;
  margin-left: 268px;
  color: #f01010;
  font-size: 19px;
}
.title-right {
  display: flex;
  align-items: center;
  margin-left: auto;
  height: 100%;
}
.sub-menu {
  display: flex;
  gap: 20px;
  margin-right: 25px;
}
.clock {
  display: flex;
  align-items: center;
  gap: 10px;
  height: 100%;
  padding: 0 5px 0 3px;
  border-left: 1px solid #b0b0b0;
  border-right: 1px solid #b0b0b0;
  font-size: 17px;
}
.clock-time {
  font-size: 15px;
  letter-spacing: 1.3px;
}
.win-ctrl {
  width: 156px;
  padding-left: 13px;
  box-sizing: border-box;
  display: flex;
}

.workspace {
  display: flex;
  height: 1323px;
}
.chart-col {
  display: flex;
  flex-direction: column;
  width: 1715px;
  flex: none;
}
.toolbar {
  display: flex;
  align-items: stretch;
  height: 32px;
  box-sizing: border-box;
  border-bottom: 2px solid #b00000;
  font-size: 18px;
}
.toolbar-icon {
  display: flex;
  align-items: center;
  justify-content: center;
  width: 35px;
  border-right: 2px solid #900000;
  box-sizing: border-box;
}
.period-list {
  display: flex;
  align-items: center;
  gap: 13.5px;
  margin-left: 7px;
}
.period-list .active {
  color: #40e8f0;
}
.more-chevron {
  margin-left: -9px;
}
.tool-btns {
  display: flex;
  margin-left: auto;
}
.tool-btns span {
  display: flex;
  align-items: center;
  justify-content: center;
  width: 52.75px;
  box-sizing: border-box;
  border-left: 1px solid #900000;
}

.pane-main {
  display: block;
  flex: none;
  border-bottom: 2px solid #c80000;
  height: 699px;
  box-sizing: border-box;
}
.pane-volume {
  display: block;
  flex: none;
}

.grid {
  stroke: #a80000;
  stroke-width: 1.5;
  stroke-dasharray: 2 4;
}
.axis {
  stroke: #b00000;
  stroke-width: 2;
}
.tick {
  stroke: #b00000;
  stroke-width: 1.5;
}
.ma {
  fill: none;
  stroke-width: 1.6;
  stroke-linejoin: round;
}
.ma-thin {
  stroke-width: 1.4;
}
.wick-up {
  stroke: #f00000;
  stroke-width: 2;
}
.wick-down {
  stroke: #40d0d0;
  stroke-width: 2;
}
.body-up {
  fill: #000;
  stroke: #f00000;
  stroke-width: 2;
}
.body-down {
  fill: #54fcfc;
  stroke: #54fcfc;
  stroke-width: 2;
}
.vol-up {
  fill: #000;
  stroke: #ff2020;
  stroke-width: 1.5;
}
.vol-down {
  fill: #54fcfc;
  stroke: #30c0c0;
  stroke-width: 1;
}

.t-18 {
  font-size: 18px;
}
.t-17 {
  font-size: 17.5px;
}
.t-cjk {
  font-size: 18px;
}
.t-tag {
  font-size: 9px;
  fill: #e8e8e8;
}
.t-date {
  font-size: 17px;
  fill: #a8a8ff;
}
.fill-gray {
  fill: #c0c0c0;
}
.fill-white {
  fill: #e0e0e0;
}
.fill-yellow {
  fill: #e8e800;
}
.fill-magenta {
  fill: #e000e0;
}
.fill-green {
  fill: #00e000;
}
.fill-axis {
  fill: #c83030;
}
.fill-axis-bright {
  fill: #e02020;
}

.tab-row {
  display: flex;
  height: 27px;
  box-sizing: border-box;
  border-top: 2px solid #a00000;
  font-size: 18px;
  line-height: 20px;
  flex: none;
}
.tab-row + .tab-row {
  height: 26px;
}
.tab {
  display: flex;
  align-items: center;
  justify-content: center;
  box-sizing: border-box;
  border-right: 1px solid #900000;
  white-space: nowrap;
  overflow: hidden;
}
.tab-cyan {
  color: #40e8f0;
}
.tab-olive {
  color: #c8c800;
}
.tab-end {
  margin-left: auto;
  width: 77px;
  margin-right: 44px;
  border-left: 1px solid #900000;
}

.quote {
  display: flex;
  flex-direction: column;
  width: 407px;
  flex: none;
  box-sizing: border-box;
  padding-right: 4px;
  border-left: 2px solid #b00000;
  overflow: hidden;
}
.quote-title {
  display: flex;
  align-items: flex-start;
  height: 42px;
  padding-left: 52px;
  box-sizing: border-box;
  padding-top: 5px;
}
.stock-name {
  font-size: 28px;
  line-height: 34px;
  font-weight: 700;
  color: #18c8e8;
}
.stock-code {
  margin-left: 8px;
  margin-top: 7px;
  font-size: 21px;
  color: #b0b0b0;
}
.stock-flag {
  margin-left: 8px;
  margin-top: 1px;
  font-size: 15px;
  color: #f03030;
}
.quote-price {
  display: flex;
  justify-content: space-between;
  align-items: center;
  height: 42px;
  padding: 0 3px 2px 3px;
  font-size: 29px;
  font-weight: 700;
  color: #ff3232;
  border-bottom: 2px solid #b00000;
  box-sizing: border-box;
}
.price-up {
  margin-right: 8px;
}
.num {
  font-size: 20px;
  line-height: 1;
  font-weight: 700;
  letter-spacing: 1px;
  text-align: right;
  white-space: nowrap;
}
.lbl {
  font-size: 24px;
  line-height: 1;
  font-weight: 400;
  letter-spacing: 0;
  color: #c0c0c0;
  white-space: nowrap;
}
.lbl-sub {
  font-size: 16px;
}
.red {
  color: #ff3232;
}
.yellow {
  color: #c8c800;
}
.green {
  color: #00e000;
}
.purple {
  color: #c000c0;
}
.gray {
  color: #c0c0c0;
}
.unit {
  font-size: 24px;
  font-weight: 400;
  font-style: normal;
  letter-spacing: 0;
}

.book {
  padding-left: 2px;
}
.book-sell {
  padding-top: 1px;
}
.book-buy {
  padding-top: 1px;
  border-bottom: 2px solid #b00000;
  padding-bottom: 2px;
}
.book-row {
  display: grid;
  grid-template-columns: 131px 65px 1fr;
  grid-template-rows: 100%;
  align-items: center;
  height: 27px;
}
.book-split {
  display: flex;
  height: 2px;
}
.book-split i {
  width: 171px;
  background: #b07820;
}
.book-split b {
  flex: 1;
  background: #2878c0;
}
.stat-block {
  padding-left: 2px;
  border-bottom: 2px solid #b00000;
}
.stat-row {
  display: grid;
  grid-template-columns: 76px 120px 8px 60px 1fr;
  grid-template-rows: 100%;
  align-items: center;
  height: 28.5px;
}
.stat-row .lbl-b {
  grid-column: 4;
}
.stat-b {
  padding-top: 1px;
  padding-bottom: 5px;
}
.pe {
  font-size: 22px;
  font-weight: 700;
}
.flow-block {
  padding-left: 2px;
  padding-top: 1px;
  padding-bottom: 1px;
  border-bottom: 2px solid #b00000;
}
.flow-row {
  display: grid;
  grid-template-columns: 138px 120px 81px 1fr;
  grid-template-rows: 100%;
  align-items: center;
  height: 28.6px;
}
.flow-lbl {
  font-size: 23.5px;
}
.flow-track i {
  display: block;
  height: 10px;
  background: #ff3232;
}
.ticks {
  padding-top: 2px;
  padding-left: 1px;
}
.tick-row {
  display: grid;
  grid-template-columns: 78px 119px 118px 35px 1fr;
  grid-template-rows: 100%;
  align-items: center;
  height: 27.05px;
}
.tick-time {
  text-align: left;
}
.tick-side {
  padding-left: 24px;
  text-align: left;
}

.sidebar {
  display: flex;
  flex-direction: column;
  align-items: center;
  width: 38px;
  flex: none;
  box-sizing: border-box;
  padding-top: 0;
  background: #f0f0f0;
  border-left: 2px solid #9a9a9a;
}
.side-btn {
  display: flex;
  align-items: center;
  justify-content: center;
  width: 100%;
  height: 34.4px;
  flex: none;
}
.side-sep {
  width: 28px;
  height: 1px;
  margin: 6px 0 5px;
  background: #b0b0b0;
  flex: none;
}
.side-sep-wide {
  margin: 7px 0 8px;
}
.arrow {
  fill: #fff;
  stroke: #4a8ae8;
  stroke-width: 1.5;
}
.box {
  fill: #fff;
  stroke: #4a8ae8;
  stroke-width: 1.5;
}
.icon-text {
  display: flex;
  align-items: center;
  justify-content: center;
  width: 24px;
  height: 20px;
  box-sizing: border-box;
  background: #fff;
  border: 1.5px solid #4a8ae8;
  color: #1a5cb0;
  font-size: 16px;
}
.icon-text small {
  font-size: 11px;
}
.icon-orange {
  color: #f07010;
  font-weight: 700;
  font-size: 14px;
}
.rsi {
  color: #2a3eb0;
  font-weight: 700;
  font-size: 15px;
  letter-spacing: -0.5px;
}
.t-dollar {
  font-size: 19px;
  font-weight: 700;
  fill: #c03030;
}
.t-fx {
  font-size: 13px;
  font-style: italic;
  fill: #1a5cb0;
}
.side-cycle {
  color: #1a5cb0;
  font-size: 17px;
  box-sizing: border-box;
}
.pressed {
  background: #fafafa;
  border: 1px solid #b8b8b8;
  border-right-color: #f8f8f8;
  border-bottom-color: #f8f8f8;
}

.statusbar {
  display: flex;
  align-items: center;
  height: 37px;
  box-sizing: border-box;
  background: #f0f0f0;
  border-top: 1px solid #d0d0d0;
  flex: none;
}
.idx-icon {
  width: 19px;
  height: 24px;
  margin: 0 3px 0 2px;
  box-sizing: border-box;
  border: 3px solid #e8a030;
  border-radius: 3px;
  background: #f8e080;
  flex: none;
}
.status-item {
  flex: none;
  font-size: 21px;
  white-space: nowrap;
  transform: scaleY(1.18);
}
.st-label {
  color: #333;
  font-size: 22px;
}
.st-red {
  color: #f00000;
}
.st-dark {
  color: #111;
}
.breadth {
  flex: none;
  border-left: 1px solid #b0b0b0;
  margin-left: 0;
}

.watermark {
  position: absolute;
  left: 1360px;
  top: 1314px;
  display: flex;
  align-items: center;
  width: 800px;
  height: 81px;
  background: #7fabd9;
}
.wm-cn {
  margin-left: 16px;
  font-size: 54px;
  line-height: 50px;
  font-weight: 900;
  letter-spacing: 1.5px;
  color: #150a8c;
  white-space: nowrap;
}
.wm-logo {
  margin-left: 24px;
  flex: none;
}
.wm-url {
  margin-left: 20px;
  font-family: "DejaVu Serif", "Liberation Serif", serif;
  font-size: 48px;
  font-weight: 700;
  color: #fff;
  white-space: nowrap;
}
</style>
